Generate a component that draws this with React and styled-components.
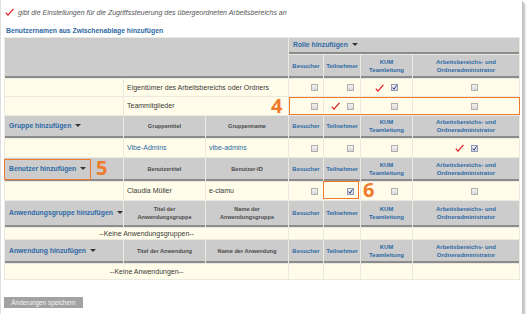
import React from 'react';
import styled, { createGlobalStyle } from 'styled-components';

const BLUE = '#2e6aa5';
const ORANGE = '#ef7a2c';
const CREAM = '#fffde9';
const GRAY = '#cccccc';

const GlobalStyle = createGlobalStyle`
  html, body { margin: 0; padding: 0; background: #ffffff; }
  body { font-family: "Liberation Sans", Arial, Helvetica, sans-serif; color: #333; }
  * { box-sizing: border-box; }
`;

const Panel = styled.div`
  width: 522px;
  height: 314px;
  background: #fff;
  border-left: 1px solid #dedede;
  box-shadow: 1px 1px 0 #c2c2c2, 3px 3px 2px rgba(0, 0, 0, 0.25);
  padding: 7px 0 0 3px;
  display: flex;
  flex-direction: column;
  align-items: flex-start;
`;

const Intro = styled.div`
  display: flex;
  align-items: center;
  gap: 4px;
  height: 10px;
  padding-left: 1px;
  font-size: 7px;
  font-style: italic;
  color: #555;
  white-space: nowrap;
`;

const Title = styled.div`
  margin-top: 9px;
  height: 10px;
  line-height: 10px;
  padding-left: 2px;
  font-size: 6.8px;
  font-weight: bold;
  color: ${BLUE};
  white-space: nowrap;
`;

const TableWrap = styled.div`
  position: relative;
  margin-top: 1px;
`;

const Table = styled.table`
  width: 516px;
  table-layout: fixed;
  border-collapse: separate;
  border-spacing: 1px;
  background: #ebeae0;
`;

const Head = styled.th`
  background: ${GRAY};
  border-bottom: ${(p) => (p.$noLine ? '0' : '2px solid #8c8c8c')};
  height: ${(p) => p.$h}px;
  padding: 0 2px;
  vertical-align: middle;
  text-align: center;
  font-weight: bold;
  font-size: ${(p) => (p.$role ? '6px' : '5.6px')};
  line-height: 8px;
  color: ${(p) => (p.$role ? BLUE : '#4a4a4a')};
  white-space: nowrap;
  overflow: hidden;
`;

const SectionHead = styled(Head)`
  text-align: left;
  padding-left: 4px;
  font-size: 6.8px;
  color: ${BLUE};
`;

const Caret = styled.span`
  display: inline-block;
  width: 0;
  height: 0;
  margin-left: 4px;
  vertical-align: 1px;
  border-left: 3px solid transparent;
  border-right: 3px solid transparent;
  border-top: 3px solid #333;
`;

const Cell = styled.td`
  background: ${CREAM};
  height: ${(p) => p.$h || 18}px;
  padding: 0 ${(p) => (p.$center ? 0 : 3)}px;
  vertical-align: middle;
  text-align: ${(p) => (p.$center ? 'center' : 'left')};
  font-size: 7px;
  line-height: 8px;
  color: ${(p) => (p.$link ? BLUE : '#3a3a3a')};
  white-space: nowrap;
  overflow: hidden;
`;

const RoleCell = styled.td`
  background: ${CREAM};
  height: ${(p) => p.$h || 18}px;
  padding: 0;
  text-align: center;
  vertical-align: middle;
  font-size: 0;
`;

const RoleInner = styled.span`
  display: inline-flex;
  align-items: center;
`;

const Slot = styled.span`
  display: inline-flex;
  width: 10px;
  height: 8px;
  margin-right: 6px;
`;

const Box = styled.span`
  display: inline-flex;
  align-items: center;
  justify-content: center;
  width: 7px;
  height: 7px;
  border: 1px solid ${(p) => (p.$checked ? '#8f98b8' : '#b0b0b0')};
  background: linear-gradient(#f2f2f2, #d9d9d9);
`;

const Mark = styled.div`
  position: absolute;
  border: 1.5px solid ${ORANGE};
  left: ${(p) => p.$x}px;
  top: ${(p) => p.$y}px;
  width: ${(p) => p.$w}px;
  height: ${(p) => p.$hh}px;
  pointer-events: none;
`;

const Digit = styled.div`
  position: absolute;
  left: ${(p) => p.$x}px;
  top: ${(p) => p.$y}px;
  font-family: "Open Sans", "Liberation Sans", sans-serif;
  font-weight: 700;
  font-size: 20px;
  line-height: 20px;
  color: ${ORANGE};
`;

const SaveButton = styled.button`
  margin-top: 17px;
  margin-left: 0;
  width: 79px;
  height: 11px;
  padding: 0;
  border: 0;
  background: #a2a2a2;
  color: #f4f4f4;
  font-family: "Liberation Sans", Arial, sans-serif;
  font-size: 6.4px;
  line-height: 11px;
  text-align: center;
`;

const RedCheck = () => (
  <svg width="9" height="8" viewBox="0 0 9 8">
    <path d="M0.8 4.6 L3 7.2 L8.4 0.8" fill="none" stroke="#e0242c" strokeWidth="1.3" strokeLinejoin="round" />
  </svg>
);

const TinyCheck = () => (
  <svg width="5" height="5" viewBox="0 0 5 5">
    <path d="M0.6 2.6 L2 4.2 L4.5 0.4" fill="none" stroke="#2a3580" strokeWidth="1" />
  </svg>
);

const Role = ({ mark, checked, h }) => (
  <RoleCell $h={h}>
    <RoleInner>
      <Slot>{mark ? <RedCheck /> : null}</Slot>
      <Box $checked={checked}>{checked ? <TinyCheck /> : null}</Box>
    </RoleInner>
  </RoleCell>
);

const roleLabels = [
  ['Besucher'],
  ['Teilnehmer'],
  ['KUM', 'Teamleitung'],
  ['Arbeitsbereichs- und', 'Ordneradministrator'],
];

const Lines = ({ lines }) =>
  lines.map((l, i) => (
    <React.Fragment key={i}>
      {i > 0 && <br />}
      {l}
    </React.Fragment>
  ));

const RoleHeads = ({ h }) =>
  roleLabels.map((l, i) => (
    <Head key={i} $role $h={h}>
      <Lines lines={l} />
    </Head>
  ));

const EmptyRoles = ({ h }) =>
  [0, 1, 2, 3].map((i) => <Cell key={i} $h={h} />);

const sections = [
  {
    title: 'Gruppe hinzufügen',
    cols: [['Gruppentitel'], ['Gruppenname']],
    h: 22,
    rows: [{ a: 'Vibe-Admins', b: 'vibe-admins', link: true, checks: [0, 0, 0, 1], marks: [0, 0, 0, 1] }],
  },
  {
    title: 'Benutzer hinzufügen',
    cols: [['Benutzertitel'], ['Benutzer-ID']],
    h: 23,
    rows: [{ a: 'Claudia Müller', b: 'e-clamu', checks: [0, 1, 0, 0], marks: [0, 0, 0, 0] }],
  },
  {
    title: 'Anwendungsgruppe hinzufügen',
    cols: [['Titel der', 'Anwendungsgruppe'], ['Name der', 'Anwendungsgruppe']],
    h: 26,
    empty: '--Keine Anwendungsgruppen--',
    emptyH: 11,
  },
  {
    title: 'Anwendung hinzufügen',
    cols: [['Titel der Anwendung'], ['Name der Anwendung']],
    h: 23,
    empty: '--Keine Anwendungen--',
    emptyH: 15,
  },
];

const ownerRows = [
  { text: 'Eigentümer des Arbeitsbereichs oder Ordners', checks: [0, 0, 1, 0], marks: [0, 0, 1, 0], h: 17 },
  { text: 'Teammitglieder', checks: [0, 0, 0, 0], marks: [0, 1, 0, 0], h: 18 },
];

export default function App() {
  return (
    <>
      <GlobalStyle />
      <Panel>
        <Intro>
          <RedCheck />
          <span>gibt die Einstellungen für die Zugriffssteuerung des übergeordneten Arbeitsbereichs an</span>
        </Intro>
        <Title>Benutzernamen aus Zwischenablage hinzufügen</Title>
        <TableWrap>
          <Table>
            <colgroup>
              <col style={{ width: 118 }} />
              <col style={{ width: 81 }} />
              <col style={{ width: 82 }} />
              <col style={{ width: 34 }} />
              <col style={{ width: 36 }} />
              <col style={{ width: 51 }} />
              <col style={{ width: 106 }} />
            </colgroup>
            <tbody>
              <tr>
                <Head colSpan={3} rowSpan={2} $h={20} />
                <SectionHead colSpan={4} $h={16}>
                  Rolle hinzufügen
                  <Caret />
                </SectionHead>
              </tr>
              <tr>
                <RoleHeads h={23} />
              </tr>
              {ownerRows.map((r, i) => (
                <tr key={i}>
                  <Cell $h={r.h} />
                  <Cell colSpan={2} $h={r.h}>
                    {r.text}
                  </Cell>
                  {r.checks.map((c, j) => (
                    <Role key={j} checked={!!c} mark={!!r.marks[j]} h={r.h} />
                  ))}
                </tr>
              ))}
              {sections.map((s) => (
                <React.Fragment key={s.title}>
                  <tr>
                    <SectionHead $h={s.h}>
                      {s.title}
                      <Caret />
                    </SectionHead>
                    {s.cols.map((c, i) => (
                      <Head key={i} $h={s.h}>
                        <Lines lines={c} />
                      </Head>
                    ))}
                    <RoleHeads h={s.h} />
                  </tr>
                  {s.rows &&
                    s.rows.map((r, i) => (
                      <tr key={i}>
                        <Cell />
                        <Cell $link={r.link}>{r.a}</Cell>
                        <Cell $link={r.link}>{r.b}</Cell>
                        {r.checks.map((c, j) => (
                          <Role key={j} checked={!!c} mark={!!r.marks[j]} />
                        ))}
                      </tr>
                    ))}
                  {s.empty && (
                    <tr>
                      <Cell colSpan={3} $center $h={s.emptyH}>
                        {s.empty}
                      </Cell>
                      <EmptyRoles h={s.emptyH} />
                    </tr>
                  )}
                </React.Fragment>
              ))}
            </tbody>
          </Table>
          <Mark $x={285} $y={60} $w={231} $hh={18} />
          <Digit $x={267} $y={59}>4</Digit>
          <Mark $x={0} $y={122} $w={87} $hh={21} />
          <Digit $x={92} $y={121}>5</Digit>
          <Mark $x={319} $y={144} $w={36} $hh={18} />
          <Digit $x={359} $y={143}>6</Digit>
        </TableWrap>
        <SaveButton>Änderungen speichern</SaveButton>
      </Panel>
    </>
  );
}
